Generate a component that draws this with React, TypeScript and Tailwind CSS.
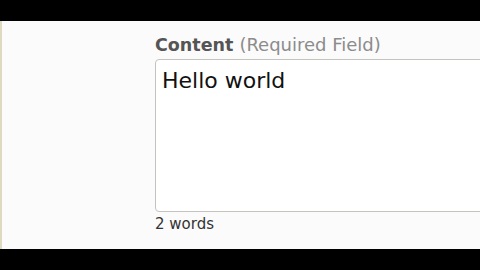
import React from "react";

const font = { fontFamily: '"DejaVu Sans", Verdana, sans-serif' };

export default function App() {
  const text = "Hello world";
  const words = text.trim().split(/\s+/).length;

  return (
    <div className="flex h-[270px] w-[480px] flex-col overflow-hidden bg-black" style={font}>
      <div className="h-[21px] bg-black" />
      <div className="flex flex-1 border-l-[2px] border-[#dedac0] bg-[#fbfbfb] pl-[153px] pt-[14px]">
        <div className="flex flex-col">
          <label className="whitespace-nowrap text-[17.5px] leading-[20px] text-[#555]">
            <span className="font-bold">Content</span>
            <span className="ml-[6px] text-[18px] text-[#8c8c8c]">(Required Field)</span>
          </label>
          <div className="mt-[4px] h-[153px] w-[420px] rounded-[4px] border border-[#c4c4bc] bg-white pl-[6px] pt-[8px] text-[22px] leading-[26px] text-[#111]">
            {text}
          </div>
          <div className="mt-[3px] text-[15px] leading-[18px] text-[#333]">{words} words</div>
        </div>
      </div>
      <div className="h-[21px] bg-black" />
    </div>
  );
}
